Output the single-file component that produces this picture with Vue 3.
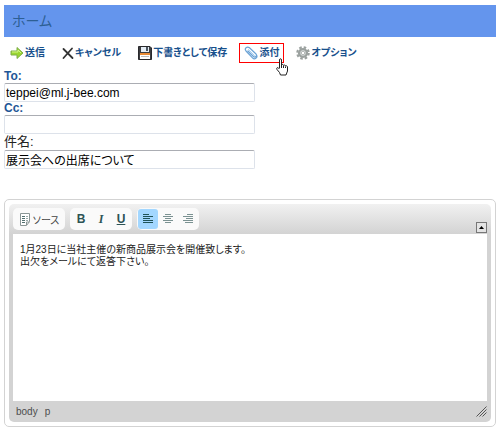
<template>
  <div class="mail-page">
    <header class="page-header">
      <h1>ホーム</h1>
    </header>

    <!-- Mail actions -->
    <nav class="actions">
      <button type="button" class="action">
        <svg width="14" height="14" viewBox="0 0 14 14">
          <path d="M1 5H7V1.5L13 7L7 12.5V9H1Z" fill="#9bd72f" stroke="#7fae4a" />
          <path d="M2 6H8V4L11 7" fill="none" stroke="#d3f58b" />
        </svg>
        <span>送信</span>
      </button>
      <button type="button" class="action">
        <svg width="12" height="14" viewBox="0 0 12 14">
          <path d="M1.5 3L10.5 12M10 2.5L1.5 12" fill="none" stroke="#333" stroke-width="1.8" stroke-linecap="round" />
        </svg>
        <span>キャンセル</span>
      </button>
      <button type="button" class="action">
        <svg width="14" height="14" viewBox="0 0 14 14">
          <path d="M0.5 0.5H12L13.5 2V13.5H0.5Z" fill="#3d3d40" stroke="#29292c" />
          <rect x="3" y="1" width="8" height="5" fill="#e4edf5" />
          <rect x="8" y="1" width="2" height="4" fill="#4b5560" />
          <rect x="2" y="7" width="10" height="6" fill="#fff" />
          <rect x="2" y="7" width="10" height="2" fill="#e98b35" />
          <path d="M3 10.5H11" stroke="#bbb" />
        </svg>
        <span>下書きとして保存</span>
      </button>
      <button type="button" class="action highlighted">
        <svg width="14" height="14" viewBox="0 0 14 14" fill="none" stroke-linecap="round">
          <path d="M4 5L9.5 10.5C11 12 13.5 10 12 8L5.5 1.8C3 -0.2 0 2.5 2 5L8.5 11.8C10.5 14 14 12 12.6 9" stroke="#6ba3d6" stroke-width="1.2" />
          <path d="M4.5 3.5L10.5 9.5" stroke="#a9d0f2" />
        </svg>
        <span>添付</span>
        <svg class="pointer" width="13" height="18" viewBox="0 0 13 18">
          <path
            d="M3.5 10V2C3.5 0.3 5.5 0.3 5.5 2V7C6 6 7.5 6.3 7.5 7.5C8.2 6.6 9.5 7 9.5 8C10.5 7.4 11.5 8 11.5 9V13L10 17H4.5L3.5 14.5L1 11.5C0 10 1.5 9 2.5 10L3.5 11"
            fill="#fff" stroke="#222" />
          <path d="M5.5 7V10M7.5 8V10M9.5 8.5V10" stroke="#222" />
        </svg>
      </button>
      <button type="button" class="action">
        <svg width="14" height="14" viewBox="0 0 14 14">
          <circle cx="7" cy="7" r="5.7" fill="none" stroke="#9ba19f" stroke-width="2.2" stroke-dasharray="2.5 1.98" />
          <circle cx="7" cy="7" r="3.9" fill="#dce0df" stroke="#9ba19f" stroke-width="2.4" />
          <circle cx="7" cy="7" r="1.7" fill="#fff" stroke="#b4b9b7" />
        </svg>
        <span>オプション</span>
      </button>
    </nav>

    <!-- Address and subject -->
    <form class="fields" @submit.prevent>
      <label class="address-label" for="mail-to">To:</label>
      <input id="mail-to" v-model="to" type="text" />
      <label class="address-label" for="mail-cc">Cc:</label>
      <input id="mail-cc" v-model="cc" type="text" />
      <label class="subject-label" for="mail-subject">件名:</label>
      <input id="mail-subject" v-model="subject" type="text" />
    </form>

    <!-- Rich text editor -->
    <section class="editor">
      <div class="editor-inner">
        <div class="editor-top">
          <div class="group">
            <button type="button" class="tool source">
              <svg width="12" height="13" viewBox="0 0 12 13" fill="none">
                <path d="M1.5 0.5H10.5V8.5L7.5 12.5H1.5Z" fill="#fff" stroke="#8a9696" />
                <path d="M3 3.5H6M3 5.5H6M3 7.5H6M3 9.5H6" stroke="#527070" />
                <path d="M7 3.5H9M7 5.5H9M7 7.5H9" stroke="#9aabab" />
                <path d="M7.5 12V9H10.5" stroke="#8a9696" />
              </svg>
              <span>ソース</span>
            </button>
          </div>
          <div class="group">
            <button type="button" class="tool glyph" aria-label="太字"><b>B</b></button>
            <button type="button" class="tool glyph italic" aria-label="斜体"><i>I</i></button>
            <button type="button" class="tool glyph" aria-label="下線"><u>U</u></button>
          </div>
          <div class="group">
            <button
              v-for="item in alignments"
              :key="item.name"
              type="button"
              class="tool"
              :class="{ active: align === item.name }"
              :aria-label="item.label"
              @click="align = item.name"
            >
              <svg width="12" height="10" viewBox="0 0 12 10">
                <path :d="item.path" stroke="currentColor" />
              </svg>
            </button>
          </div>
          <button type="button" class="collapse" aria-label="ツールバーを閉じる">
            <svg width="5" height="3" viewBox="0 0 5 3"><path d="M0 3L2.5 0L5 3Z" fill="#000" /></svg>
          </button>
        </div>
        <textarea v-model="body" class="editor-body" aria-label="本文"></textarea>
        <footer class="editor-footer">
          <a href="#">body</a>
          <a href="#">p</a>
          <svg class="resizer" width="11" height="11" viewBox="0 0 11 11">
            <path d="M0.5 10.5L10.5 0.5M3.5 10.5L10.5 3.5M6.5 10.5L10.5 6.5" stroke="#555" />
          </svg>
        </footer>
      </div>
    </section>
  </div>
</template>

<script setup>
import { ref } from 'vue'

const to = ref('teppei@ml.j-bee.com')
const cc = ref('')
const subject = ref('展示会への出席について')
const body = ref('1月23日に当社主催の新商品展示会を開催致します。\n出欠をメールにて返答下さい。')
const align = ref('left')

const alignments = [
  { name: 'left', label: '左揃え', path: 'M1 0.5H7M1 2.5H11M1 4.5H8M1 6.5H11M1 8.5H11' },
  { name: 'center', label: '中央揃え', path: 'M3 0.5H9M1 2.5H11M3 4.5H9M1 6.5H11M3 8.5H9' },
  { name: 'right', label: '右揃え', path: 'M5 0.5H11M1 2.5H11M4 4.5H11M1 6.5H11M3 8.5H11' },
]
</script>

<style>
body {
  margin: 0;
  background: #fff;
}
</style>

<style scoped>
.mail-page {
  padding: 5px 4px;
  color: #222;
  font-family: "Liberation Sans", "Noto Sans CJK JP", sans-serif;
  font-feature-settings: "palt";
}

button,
input,
textarea {
  box-sizing: border-box;
  margin: 0;
  font-family: inherit;
  font-feature-settings: inherit;
}

button {
  padding: 0;
  border: 0;
  background: none;
}

svg {
  display: block;
  flex: none;
}

.page-header {
  padding: 0 8px;
  background: #6495ed;
}

.page-header h1 {
  margin: 0;
  color: #2d5f94;
  font-size: 14px;
  font-weight: 400;
  line-height: 32px;
}

.actions {
  display: flex;
  gap: 7px;
  padding: 6px 1px 7px;
}

.action {
  position: relative;
  display: flex;
  align-items: center;
  gap: 1px;
  height: 20px;
  padding: 0 4px;
  border: 1px solid transparent;
  color: #17508c;
  font-size: 10px;
  font-weight: 700;
  line-height: 14px;
  white-space: nowrap;
}

.action.highlighted {
  border-color: #f00;
}

.pointer {
  position: absolute;
  right: -6px;
  bottom: -14px;
  z-index: 1;
}

.fields {
  display: flex;
  flex-direction: column;
  align-items: flex-start;
}

.fields input {
  width: 51%;
  height: 19px;
  padding: 0 1px;
  border: 1px solid #dde2ea;
  border-top-color: #abadb3;
  border-radius: 2px;
  background: #fff;
  color: #000;
  font-size: 12px;
}

.address-label {
  color: #1f5697;
  font-size: 12px;
  font-weight: 700;
  line-height: 13px;
}

.subject-label {
  font-size: 13px;
  line-height: 16px;
}

.editor {
  margin-top: 30px;
  padding: 4px;
  border: 1px solid #d3d3d3;
  border-radius: 5px;
}

.editor-inner {
  padding: 4px 4px 0;
  border-radius: 5px;
  background: linear-gradient(#f1f1f1, #d3d3d3 30px);
}

.editor-top {
  display: flex;
  align-items: flex-end;
  gap: 5px;
  padding-bottom: 4px;
}

.group {
  display: flex;
  padding: 1px;
  border-radius: 5px;
  background: #fafafa;
}

.tool {
  display: flex;
  align-items: center;
  justify-content: center;
  width: 20px;
  height: 20px;
  border-radius: 3px;
  color: #7b9292;
}

.tool.source {
  gap: 2px;
  width: 50px;
  color: #444;
  font-size: 10px;
}

.tool.glyph {
  color: #2d5355;
  font-size: 12px;
  font-weight: 700;
}

.tool.italic {
  font-family: "Liberation Serif", serif;
}

.tool.active {
  background: #a3d7ff;
  color: #1f5358;
}

.collapse {
  display: flex;
  align-items: center;
  justify-content: center;
  width: 11px;
  height: 11px;
  margin-left: auto;
  margin-bottom: -3px;
  border: 1px solid #777;
  background: #e4e4e4;
}

.editor-body {
  display: block;
  width: 100%;
  height: 167px;
  padding: 10px 7px;
  border: 0;
  outline: 0;
  background: #fff;
  color: #222;
  font-size: 10px;
  line-height: 12px;
  resize: none;
}

.editor-footer {
  display: flex;
  align-items: center;
  gap: 7px;
  height: 21px;
  padding: 0 0 0 3px;
}

.editor-footer a {
  color: #4d4d4d;
  font-size: 10px;
  text-decoration: none;
}

.resizer {
  margin-left: auto;
}
</style>
